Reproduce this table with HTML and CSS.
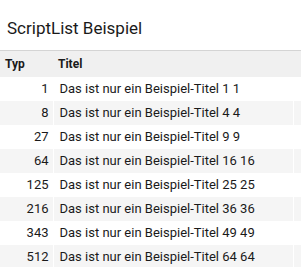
FILE: index.html
```html
<!DOCTYPE html>
<html lang="de">
<head>
    <meta charset="UTF-8">
    <meta name="viewport" content="width=device-width, initial-scale=1.0">
    <title>ScriptList Beispiel</title>
    <link rel="stylesheet" href="styles.css">
</head>
<body>
    <div class="panel">
        <h1 class="panel-title">ScriptList Beispiel</h1>

        <table class="script-list">
            <thead>
                <tr>
                    <th class="col-typ">Typ</th>
                    <th class="col-titel">Titel</th>
                    <th class="col-extra"></th>
                </tr>
            </thead>
            <tbody>
                <tr><td class="col-typ">1</td><td class="col-titel">Das ist nur ein Beispiel-Titel 1 1</td><td class="col-extra"></td></tr>
                <tr><td class="col-typ">8</td><td class="col-titel">Das ist nur ein Beispiel-Titel 4 4</td><td class="col-extra"></td></tr>
                <tr><td class="col-typ">27</td><td class="col-titel">Das ist nur ein Beispiel-Titel 9 9</td><td class="col-extra"></td></tr>
                <tr><td class="col-typ">64</td><td class="col-titel">Das ist nur ein Beispiel-Titel 16 16</td><td class="col-extra"></td></tr>
                <tr><td class="col-typ">125</td><td class="col-titel">Das ist nur ein Beispiel-Titel 25 25</td><td class="col-extra"></td></tr>
                <tr><td class="col-typ">216</td><td class="col-titel">Das ist nur ein Beispiel-Titel 36 36</td><td class="col-extra"></td></tr>
                <tr><td class="col-typ">343</td><td class="col-titel">Das ist nur ein Beispiel-Titel 49 49</td><td class="col-extra"></td></tr>
                <tr><td class="col-typ">512</td><td class="col-titel">Das ist nur ein Beispiel-Titel 64 64</td><td class="col-extra"></td></tr>
            </tbody>
        </table>
    </div>
</body>
</html>
```

FILE: styles.css
```css
:root {
    --text: #1a1a1a;
    --header-bg: #f0f0f0;
    --header-border: #d4d4d4;
    --stripe-bg: #f5f5f5;
    --white: #ffffff;
}

* {
    box-sizing: border-box;
    margin: 0;
    padding: 0;
}

body {
    font-family: Roboto, "Liberation Sans", sans-serif;
    color: var(--text);
    background-color: var(--white);
    overflow: hidden;
}

.panel {
    width: 301px;
}

.panel-title {
    height: 50px;
    padding: 17px 0 0 7px;
    font-size: 17px;
    font-weight: 400;
    line-height: 22px;
}

.script-list {
    width: 301px;
    border-collapse: collapse;
    table-layout: fixed;
    font-size: 13px;
}

.script-list thead tr {
    background-color: var(--header-bg);
    border-top: 1px solid var(--header-border);
}

.script-list th {
    height: 26px;
    font-weight: 700;
    font-size: 12px;
    text-align: left;
    padding: 0 5px;
}

.script-list td {
    height: 24px;
    padding: 0 5px;
    white-space: nowrap;
    overflow: hidden;
}

.script-list tbody tr:nth-child(even) td {
    background-color: var(--stripe-bg);
}

/* weisse Trennlinien zwischen den Spalten */
.script-list td + td {
    border-left: 1px solid var(--white);
}

.col-typ {
    width: 53px;
}

.script-list td.col-typ {
    text-align: right;
    padding-right: 4px;
}

.col-titel {
    width: 240px;
}

.script-list td.col-titel {
    padding-left: 6px;
}

.col-extra {
    width: 8px;
}

.script-list .col-extra {
    padding: 0;
}
```
